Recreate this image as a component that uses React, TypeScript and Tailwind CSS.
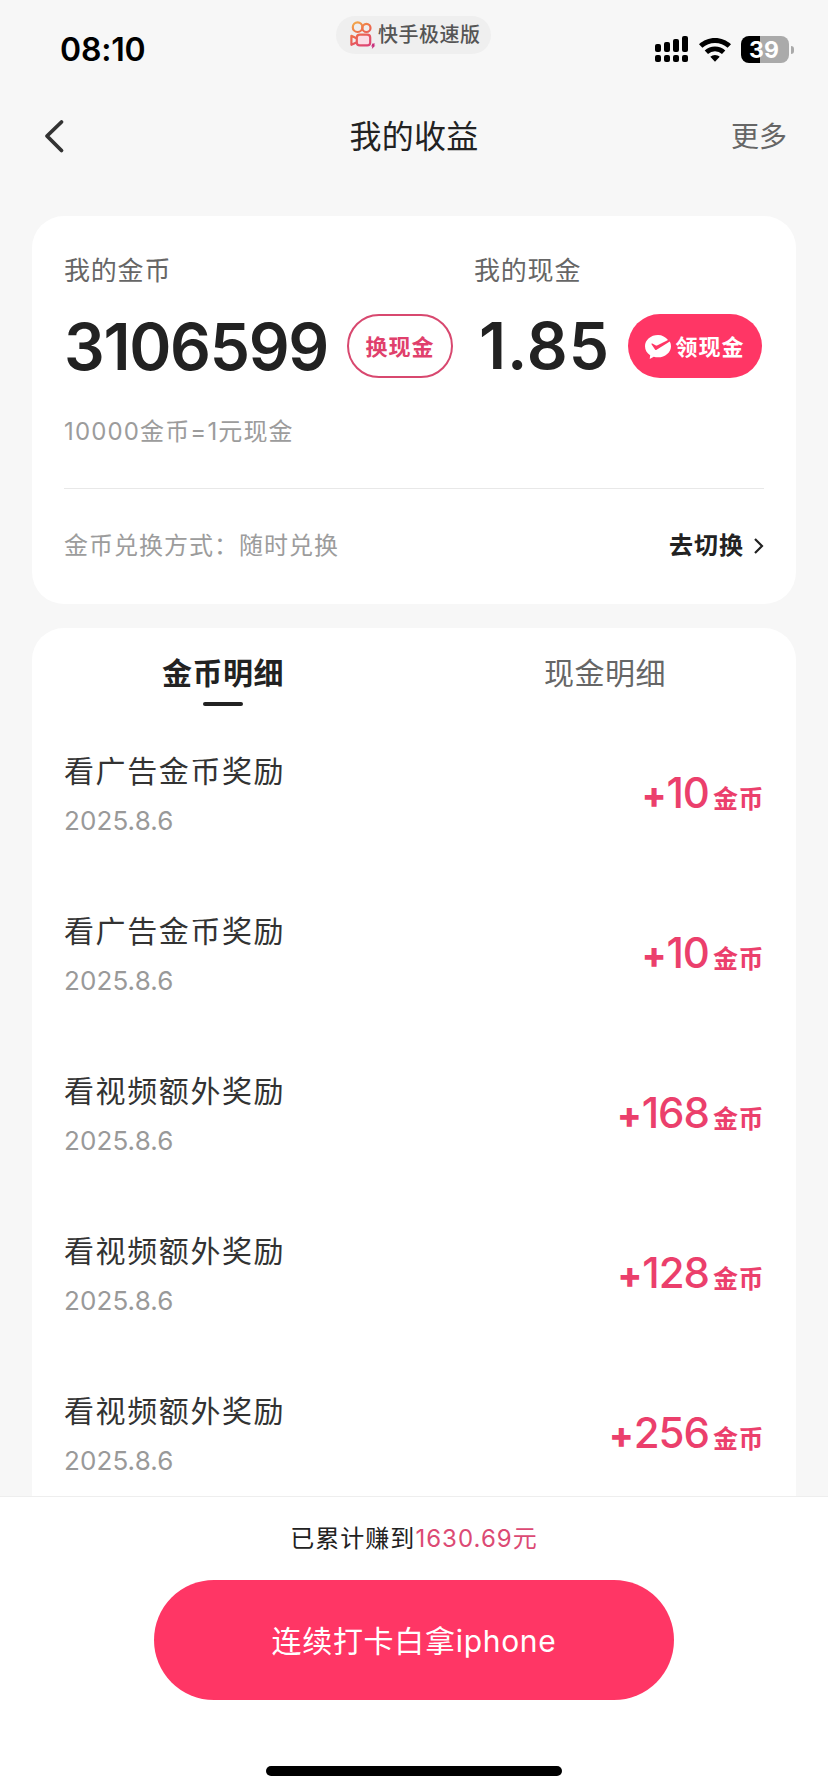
import React from "react";

const records = [
  { title: "看广告金币奖励", date: "2025.8.6", amount: "10" },
  { title: "看广告金币奖励", date: "2025.8.6", amount: "10" },
  { title: "看视频额外奖励", date: "2025.8.6", amount: "168" },
  { title: "看视频额外奖励", date: "2025.8.6", amount: "128" },
  { title: "看视频额外奖励", date: "2025.8.6", amount: "256" },
];

function AppLogo() {
  return (
    <svg className="h-7 w-[26px]" viewBox="0 0 26 28" fill="none">
      <defs>
        <linearGradient id="logo" x1="4" y1="0" x2="20" y2="28" gradientUnits="userSpaceOnUse">
          <stop offset="0" stopColor="#f2b04a" />
          <stop offset="0.4" stopColor="#ee6a4c" />
          <stop offset="1" stopColor="#d93a80" />
        </linearGradient>
      </defs>
      <g stroke="url(#logo)" strokeWidth="2.2">
        <circle cx="7.6" cy="6.2" r="4.8" />
        <circle cx="16.4" cy="6.9" r="4.1" />
        <rect x="6.8" y="13.6" width="13.4" height="10.8" rx="3" fill="#fbdde6" />
        <path d="M6.4 17.2 1.4 14.800v9l5-2.400" strokeLinejoin="round" />
      </g>
      <path d="M22.400 22.400h2.600l-1 2h1.400l-3.600 3.600.6-2.600h-1.200z" fill="#c82f7c" />
    </svg>
  );
}

function SignalIcon() {
  return (
    <svg className="h-[27px] w-[34px]" viewBox="0 0 34 27">
      <rect x="0" y="8" width="6" height="8" rx="2" />
      <rect x="9" y="6" width="6" height="10" rx="2" />
      <rect x="18" y="3" width="6" height="13" rx="2" />
      <rect x="27" y="0" width="6" height="16" rx="2" />
      <rect x="0" y="19" width="6" height="7" rx="2" />
      <rect x="9" y="19" width="6" height="7" rx="2" />
      <rect x="18" y="19" width="6" height="7" rx="2" />
      <rect x="27" y="19" width="6" height="7" rx="2" />
    </svg>
  );
}

function WifiIcon() {
  return (
    <svg className="h-6 w-8" viewBox="0 0 32 24">
      <path d="M16 0C22.2 0 27.8 2.4 32 6.2L28.600 9.800A18.600 18.600 0 0 0 16 4.900 18.600 18.600 0 0 0 3.400 9.800L0 6.2C4.2 2.4 9.800 0 16 0Z" />
      <path d="M16 8.400c4 0 7.600 1.500 10.300 4l-3.300 3.600a10.400 10.400 0 0 0-14 0l-3.300-3.600A15.100 15.100 0 0 1 16 8.400Z" />
      <path d="M16 16.900c1.800 0 3.500.7 4.700 1.800L16 23.800l-4.700-5.100A7 7 0 0 1 16 16.900Z" />
    </svg>
  );
}

function ChatCheckIcon() {
  return (
    <svg className="h-6 w-[26px]" viewBox="0 0 26 24">
      <path
        fill="#fff"
        d="M13 0C5.800 0 0 4.900 0 11.200c0 3.800 2 7 5.200 9L4.700 24l4.100-2.300c1.300.4 2.700.6 4.200.6 7.200 0 13-4.900 13-11.100 0-1.700-.4-3.300-1.200-4.700L11.600 14.800c-.6.400-1.200.3-1.600-.3L6.500 9.300c-.3-.7.2-1.100.8-.8l3.600 2.100c.4.200.7.200 1.100 0L23 5.100C20.700 2 17.100 0 13 0Z"
      />
    </svg>
  );
}

export default function App() {
  return (
    <div className="flex h-[1792px] w-[828px] flex-col overflow-hidden bg-[#f7f7f7] font-['Inter','Noto_Sans_CJK_SC',sans-serif] text-[#222]">
      <header className="grid h-24 grid-cols-[336px_155px_1fr] items-start">
        <span className="mt-[34px] pl-[60px] text-[32px] leading-8 font-semibold tracking-[-0.2px] text-black">08:10</span>
        <div className="mt-4 flex h-[38px] items-center gap-[2px] rounded-full bg-[#efefef] pl-[14px]">
          <AppLogo />
          <span className="text-[20px] leading-5 font-medium tracking-[0.5px] whitespace-nowrap text-[#555]">快手极速版</span>
        </div>
        <div className="mt-9 flex h-[27px] items-center pl-[164px]">
          <SignalIcon />
          <span className="ml-[10px] flex">
            <WifiIcon />
          </span>
          <span className="ml-[10px] flex h-[27px] w-12 items-center justify-center rounded-lg bg-[linear-gradient(to_right,#000_19px,#aaa_19px)] pt-px pr-[2px] text-[23px] leading-none font-bold text-white">
            39
          </span>
          <span className="ml-[2px] h-2 w-[3px] rounded-r-full bg-[#aaa]" />
        </div>
      </header>

      <nav className="grid h-20 grid-cols-3 items-center">
        <svg className="ml-[43px] h-9 w-6" viewBox="0 0 24 36" fill="none" stroke="#333" strokeWidth="3.8" strokeLinecap="round" strokeLinejoin="round">
          <path d="M18.500 4 4 18l14.500 14.500" />
        </svg>
        <h1 className="pt-[2px] text-center text-[32px] leading-10 tracking-[0.3px]">我的收益</h1>
        <span className="pt-[2px] pr-[41px] text-right text-[28px] leading-9 text-[#666]">更多</span>
      </nav>

      <section className="mx-8 mt-10 h-[388px] rounded-[32px] bg-white px-8 pt-[37px]">
        <div className="grid grid-cols-[410px_1fr]">
          <div>
            <p className="text-[26px] leading-9 tracking-[0.8px] text-[#666]">我的金币</p>
            <div className="mt-[25px] flex h-16 items-center">
              <span className="w-[283px] pt-px text-[64px] leading-none font-semibold tracking-[-1.3px]">3106599</span>
              <button className="h-16 w-[106px] shrink-0 rounded-full border-2 border-[#d8486f] pt-[2px] text-[22px] font-bold tracking-[1px] text-[#e0406c]">
                换现金
              </button>
            </div>
          </div>
          <div>
            <p className="text-[26px] leading-9 tracking-[0.8px] text-[#666]">我的现金</p>
            <div className="mt-[25px] flex h-16 items-center">
              <span className="w-[154px] pl-[5px] text-[64px] leading-none font-semibold tracking-[1px]">1.85</span>
              <button className="flex h-16 w-[134px] shrink-0 items-center justify-center gap-1 rounded-full bg-[#ff3665] pt-[2px] text-[22px] font-bold tracking-[1px] text-white">
                <ChatCheckIcon />
                领现金
              </button>
            </div>
          </div>
        </div>
        <p className="mt-[38px] text-[24px] leading-8 tracking-[1.150px] text-[#9c9c9c]">10000金币=1元现金</p>
        <div className="mt-[40px] h-px w-[700px] bg-[#e8e8e8]" />
        <div className="flex h-[114px] w-[700px] items-center justify-between text-[24px] tracking-[1px]">
          <span className="text-[#9c9c9c]">金币兑换方式：随时兑换</span>
          <button className="flex items-center gap-[9px] font-bold tracking-[1px]">
            去切换
            <svg className="h-[18px] w-[11px]" viewBox="0 0 11 18" fill="none" stroke="#222" strokeWidth="2.200">
              <path d="m2 2 7 7-7 7" />
            </svg>
          </button>
        </div>
      </section>

      <section className="mx-8 mt-6 h-[868px] overflow-hidden rounded-t-[32px] bg-white">
        <div className="grid h-[86px] grid-cols-2 pt-[25px] text-center text-[30px] leading-10 tracking-[0.5px]">
          <div className="flex flex-col items-center gap-[9px]">
            <span className="font-bold">金币明细</span>
            <span className="h-1 w-10 rounded-full bg-[#222]" />
          </div>
          <span className="text-[#666]">现金明细</span>
        </div>
        <ul>
          {records.map((r, i) => (
            <li key={i} className="flex h-40 items-center justify-between pr-[32px] pl-8">
              <div className="flex flex-col gap-[14px]">
                <span className="text-[30px] leading-10 tracking-[1.600px] text-[#333]">{r.title}</span>
                <span className="text-[26px] leading-8 tracking-[0.100px] text-[#999]">{r.date}</span>
              </div>
              <div className="flex items-baseline pt-[2px] text-[#eb3f6c]">
                <span className="text-[36px] font-extrabold">+</span>
                <span className="text-[42px] leading-none font-medium tracking-[-1px]">{r.amount}</span>
                <span className="ml-1 text-[25px] font-bold tracking-[0.5px]">金币</span>
              </div>
            </li>
          ))}
        </ul>
      </section>

      <footer className="flex flex-1 flex-col items-center border-t border-[#eee] bg-white">
        <p className="mt-[24px] text-[24px] leading-9 tracking-[1.050px]">
          已累计赚到<span className="text-[#dc4a74]">1630.69元</span>
        </p>
        <button className="mt-[23px] h-[120px] w-[520px] rounded-full bg-[#ff3665] pt-[2px] text-[30px] tracking-[0.7px] text-white">
          连续打卡白拿iphone
        </button>
        <div className="mt-[66px] h-[10px] w-[296px] rounded-full bg-black" />
      </footer>
    </div>
  );
}
